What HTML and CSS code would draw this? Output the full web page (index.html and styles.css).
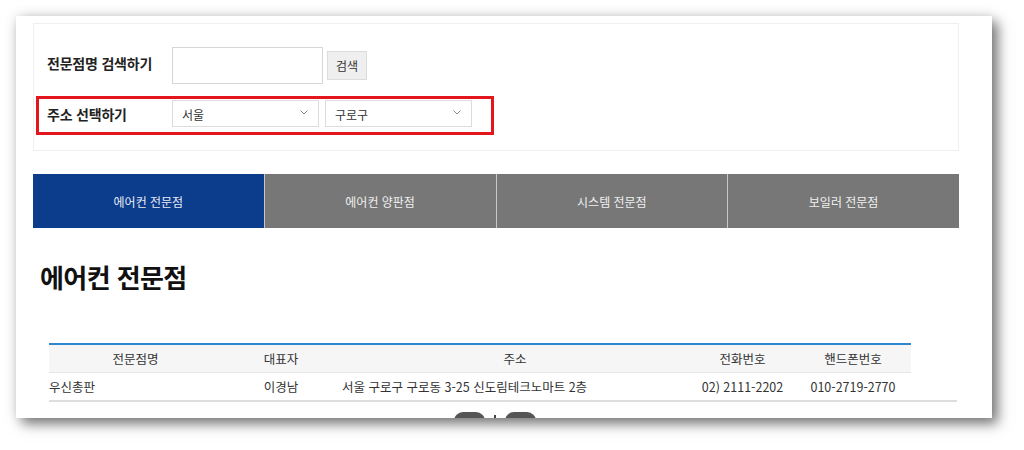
FILE: index.html
```html
<!DOCTYPE html>
<html lang="ko">
<head>
<meta charset="utf-8">
<title>전문점 찾기</title>
<link rel="stylesheet" href="styles.css">
</head>
<body>
<div class="card">
  <div class="search-box">
    <div class="row row-search">
      <span class="label">전문점명 검색하기</span>
      <input class="text-input" type="text">
      <button class="btn" type="button">검색</button>
    </div>
    <div class="row row-address">
      <span class="label">주소 선택하기</span>
      <div class="select select-1">
        <span>서울</span>
        <svg class="chev" width="8" height="5" viewBox="0 0 8 5"><path d="M0.5 0.5 L4 4 L7.5 0.5" fill="none" stroke="#8a8a8a" stroke-width="1"/></svg>
      </div>
      <div class="select select-2">
        <span>구로구</span>
        <svg class="chev" width="8" height="5" viewBox="0 0 8 5"><path d="M0.5 0.5 L4 4 L7.5 0.5" fill="none" stroke="#8a8a8a" stroke-width="1"/></svg>
      </div>
    </div>
  </div>

  <div class="tabs">
    <div class="tab active">에어컨 전문점</div>
    <div class="tab">에어컨 양판점</div>
    <div class="tab">시스템 전문점</div>
    <div class="tab">보일러 전문점</div>
  </div>

  <h2 class="title">에어컨 전문점</h2>

  <div class="table-wrap">
    <table class="list">
      <colgroup>
        <col class="c1"><col class="c2"><col class="c3"><col class="c4"><col class="c5">
      </colgroup>
      <thead>
        <tr><th>전문점명</th><th>대표자</th><th>주소</th><th>전화번호</th><th>핸드폰번호</th></tr>
      </thead>
      <tbody>
        <tr>
          <td class="left">우신총판</td>
          <td>이경남</td>
          <td class="addr">서울 구로구 구로동 3-25 신도림테크노마트 2층</td>
          <td>02) 2111-2202</td>
          <td>010-2719-2770</td>
        </tr>
      </tbody>
    </table>
  </div>

  <div class="paging">
    <span class="pg-btn pg-prev"></span>
    <span class="pg-cur"></span>
    <span class="pg-btn pg-next"></span>
  </div>
</div>
</body>
</html>
```

FILE: styles.css
```css
html, body {
  margin: 0;
  padding: 0;
  background: #ffffff;
}
body {
  font-family: "Noto Sans CJK KR", "Noto Sans", sans-serif;
  color: #222;
  height: 450px;
  overflow: hidden;
}
.card {
  margin: 16px 0 0 16px;
  width: 976px;
  height: 402px;
  box-sizing: border-box;
  padding: 7px 33px 0 17px;
  background: #fff;
  overflow: hidden;
  box-shadow: 6px 6px 12px rgba(0,0,0,0.5), 0 0 12px rgba(0,0,0,0.12);
}

/* search box */
.search-box {
  border: 1px solid #efefef;
  padding: 23px 0 15px 1px;
}
.row {
  display: flex;
  align-items: center;
}
.label {
  display: block;
  width: 125px;
  font-size: 14px;
  font-weight: 700;
  letter-spacing: -0.2px;
  color: #222;
  line-height: 20px;
}
.row-search {
  padding-left: 12px;
}
.row-search .label {
  margin-top: -6px;
}
.text-input {
  box-sizing: border-box;
  width: 151px;
  height: 37px;
  margin: 0;
  border: 1px solid #d6d6d6;
  background: #fff;
  outline: none;
}
.btn {
  box-sizing: border-box;
  width: 40px;
  height: 29px;
  margin: 0 0 0 4px;
  padding: 0;
  border: 1px solid #dcdcdc;
  background: #efefef;
  font-family: "Noto Sans CJK KR", sans-serif;
  font-size: 12px;
  color: #333;
}
.row-address {
  margin: 12px 0 0 1px;
  width: 458px;
  height: 39px;
  box-sizing: border-box;
  border: 3px solid #e3151d;
  padding: 0 0 4px 8px;
}
.select {
  box-sizing: border-box;
  height: 27px;
  border: 1px solid #dcdcdc;
  background: #fff;
  display: flex;
  align-items: center;
  justify-content: space-between;
  padding: 2px 10px 0 9px;
  font-size: 12px;
  color: #333;
}
.select-1 {
  width: 147px;
}
.select-2 {
  width: 147px;
  margin-left: 6px;
}
.chev {
  display: block;
  margin-top: -4px;
}

/* tabs */
.tabs {
  display: flex;
  margin-top: 23px;
  height: 54px;
}
.tab {
  flex: 1;
  display: flex;
  align-items: center;
  justify-content: center;
  background: #777777;
  color: #f0f0f0;
  font-size: 12px;
  border-left: 1px solid #c8c8c8;
}
.tab:first-child {
  border-left: none;
}
.tab.active {
  background: #0c3d8d;
  color: #e8ecf5;
}

/* title */
.title {
  margin: 31px 0 0 7px;
  font-size: 26px;
  line-height: 36px;
  font-weight: 700;
  letter-spacing: -0.6px;
  color: #111;
}

/* table */
.table-wrap {
  margin: 48px 0 0 16px;
  width: 908px;
  border-bottom: 2px solid #dddddd;
}
.list {
  width: 862px;
  border-collapse: collapse;
  table-layout: fixed;
  font-size: 12.5px;
  color: #333;
}
.c1 { width: 173px; }
.c2 { width: 118px; }
.c3 { width: 350px; }
.c4 { width: 105px; }
.c5 { width: 116px; }
.list thead tr {
  border-top: 2px solid #2f86d0;
}
.list th {
  font-weight: 400;
  height: 27px;
  padding: 0;
  background: #f6f6f6;
  border-bottom: 1px solid #e6e6e6;
  text-align: center;
}
.list td {
  height: 27px;
  padding: 0;
  text-align: center;
}
.list td.left {
  text-align: left;
}
.list td.addr {
  text-align: left;
  padding-left: 2px;
}

/* paging */
.paging {
  display: flex;
  justify-content: center;
  align-items: flex-start;
  gap: 9px;
  margin-top: 10px;
  padding-left: 16px;
  width: 908px;
  box-sizing: border-box;
}
.pg-btn {
  display: block;
  width: 31px;
  height: 24px;
  border-radius: 9px;
  background: #555;
}
.pg-cur {
  display: block;
  width: 2px;
  height: 12px;
  margin-top: 3px;
  background: #444;
}
```
